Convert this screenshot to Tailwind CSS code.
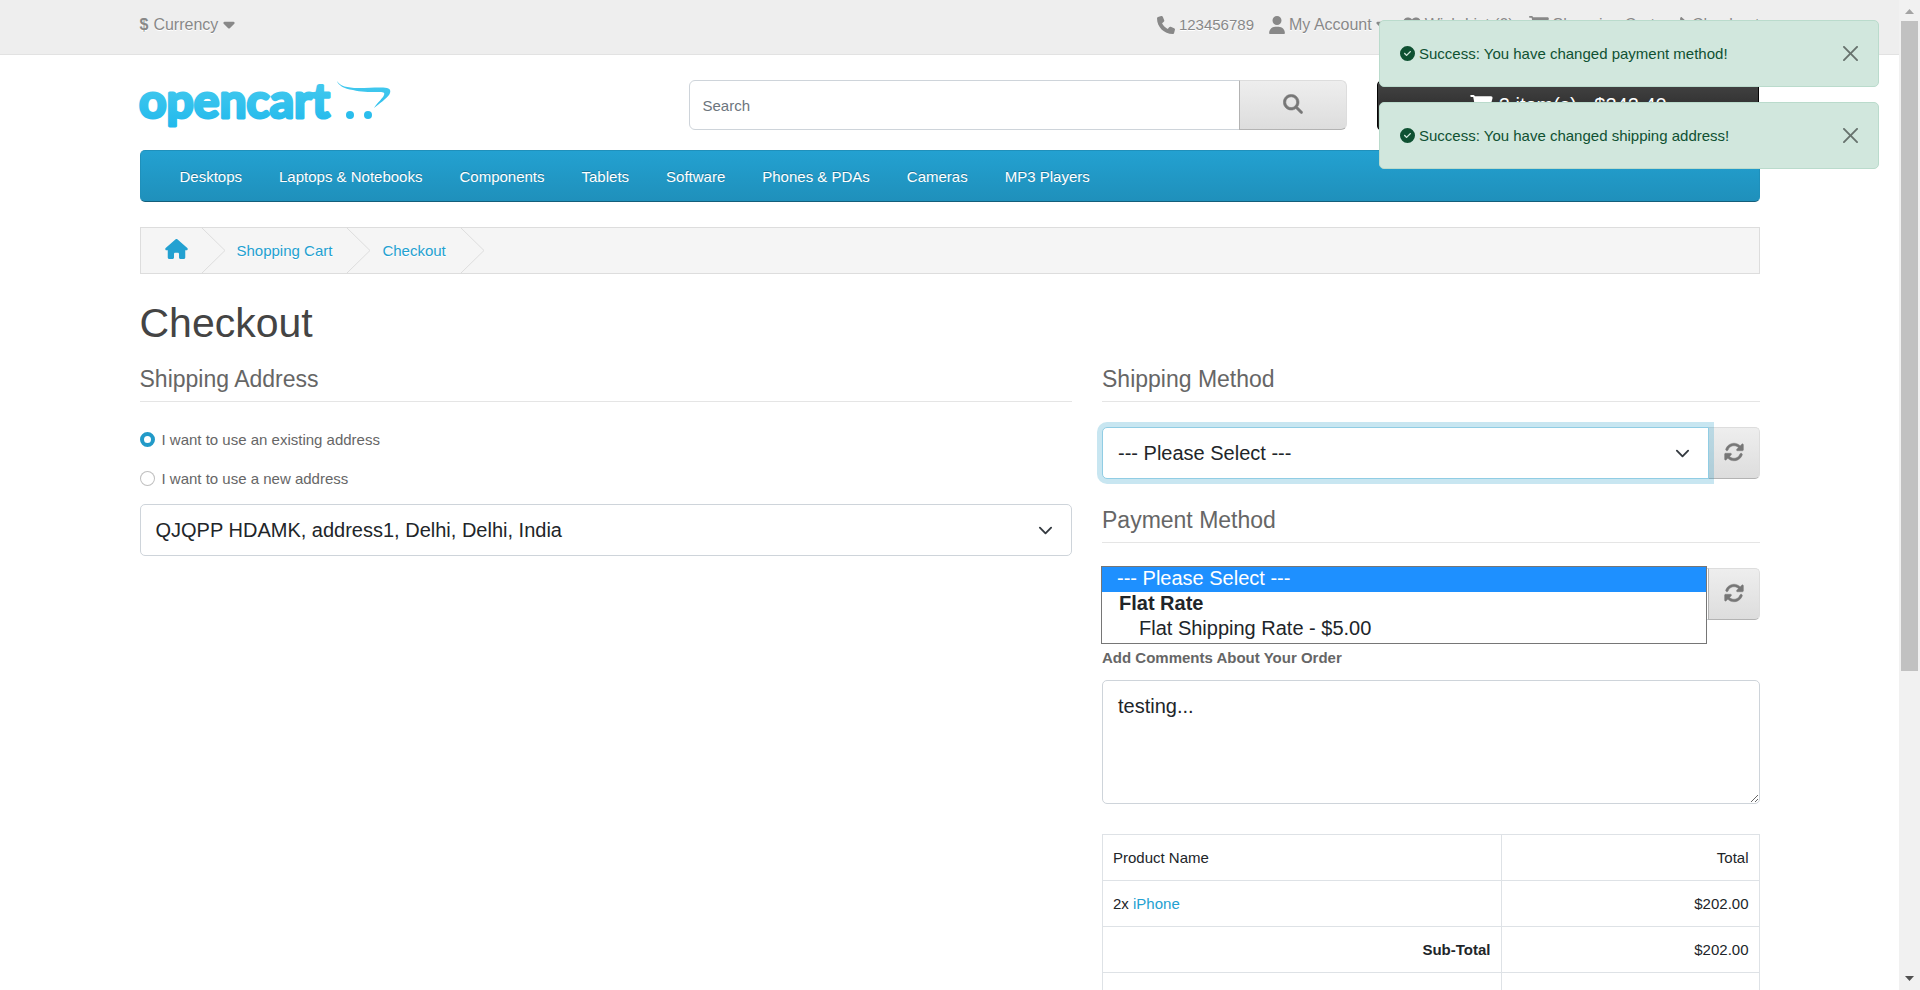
<!DOCTYPE html>
<html lang="en">
<head>
<meta charset="utf-8">
<meta name="viewport" content="width=device-width, initial-scale=1">
<title>Checkout</title>
<script src="https://cdn.jsdelivr.net/npm/@tailwindcss/browser@4"></script>
</head>
<body class="flex h-screen overflow-hidden bg-white font-['Liberation_Sans',Arial,sans-serif] text-[15px] leading-[22px] text-[#666666]">

<svg class="hidden" aria-hidden="true">
  <symbol id="phone" viewBox="0 0 512 512"><path d="M164.9 24.6c-7.7-18.6-28-28.5-47.4-23.2l-88 24C12.1 30.2 0 46 0 64C0 311.4 200.6 512 448 512c18 0 33.8-12.1 38.6-29.5l24-88c5.3-19.4-4.6-39.7-23.2-47.4l-96-40c-16.3-6.8-35.2-2.1-46.3 11.6L304.7 368C234.3 334.7 177.3 277.7 144 207.3L193.3 167c13.7-11.2 18.4-30 11.6-46.3l-40-96z"/></symbol>
  <symbol id="user" viewBox="0 0 448 512"><path d="M224 256A128 128 0 1 0 224 0a128 128 0 1 0 0 256zm-45.7 48C79.8 304 0 383.8 0 482.3C0 498.7 13.3 512 29.7 512H418.3c16.4 0 29.7-13.3 29.7-29.7C448 383.8 368.2 304 269.7 304H178.3z"/></symbol>
  <symbol id="heart" viewBox="0 0 512 512"><path d="M47.6 300.4L228.3 469.1c7.5 7 17.4 10.9 27.7 10.9s20.2-3.9 27.7-10.9L464.4 300.4c30.4-28.3 47.6-68 47.6-109.5v-5.8c0-69.9-50.5-129.5-119.4-141C347 36.5 300.6 51.4 268 84L256 96 244 84c-32.6-32.6-79-47.5-124.6-39.9C50.5 55.6 0 115.2 0 185.1v5.8c0 41.5 17.2 81.2 47.6 109.5z"/></symbol>
  <symbol id="cart" viewBox="0 0 576 512"><path d="M0 24C0 10.7 10.7 0 24 0H69.5c22 0 41.5 12.8 50.6 32h411c26.3 0 45.5 25 38.6 50.4l-41 152.3c-8.5 31.4-37 53.3-69.5 53.3H170.7l5.4 28.5c2.2 11.3 12.1 19.5 23.6 19.5H488c13.3 0 24 10.7 24 24s-10.7 24-24 24H199.7c-34.6 0-64.3-24.6-70.7-58.5L77.4 54.5c-.7-3.8-4-6.5-7.9-6.5H24C10.7 48 0 37.3 0 24zM128 464a48 48 0 1 1 96 0 48 48 0 1 1 -96 0zm336-48a48 48 0 1 1 0 96 48 48 0 1 1 0-96z"/></symbol>
  <symbol id="share" viewBox="0 0 512 512"><path d="M307 34.8c-11.5 5.1-19 16.6-19 29.2v64H176C78.8 128 0 206.8 0 304C0 417.3 81.5 467.9 100.2 478.1c2.5 1.4 5.3 1.9 8.1 1.9c10.9 0 19.7-8.9 19.7-19.7c0-7.5-4.3-14.4-9.8-19.5C108.8 431.9 96 414.4 96 384c0-53 43-96 96-96h96v64c0 12.6 7.4 24.1 19 29.2s25 3 34.4-5.4l160-144c6.7-6.1 10.6-14.7 10.6-23.8s-3.8-17.7-10.6-23.8l-160-144c-9.4-8.5-22.9-10.6-34.4-5.4z"/></symbol>
  <symbol id="search" viewBox="-10 -10 532 532"><path stroke="currentColor" stroke-width="16" d="M416 208c0 45.9-14.9 88.3-40 122.7L502.6 457.4c12.5 12.5 12.5 32.8 0 45.3s-32.8 12.5-45.3 0L330.7 376c-34.4 25.2-76.8 40-122.7 40C93.1 416 0 322.9 0 208S93.1 0 208 0S416 93.1 416 208zM208 352a144 144 0 1 0 0-288 144 144 0 1 0 0 288z"/></symbol>
  <symbol id="home" viewBox="0 0 576 512"><path d="M575.8 255.5c0 18-15 32.1-32 32.1h-32l.7 160.2c0 2.7-.2 5.4-.5 8.1V472c0 22.1-17.9 40-40 40H456c-1.1 0-2.2 0-3.3-.1c-1.4 .1-2.8 .1-4.2 .1H416 392c-22.1 0-40-17.9-40-40V448 384c0-17.7-14.3-32-32-32H256c-17.7 0-32 14.3-32 32v64 24c0 22.1-17.9 40-40 40H160 128.1c-1.5 0-3-.1-4.5-.2c-1.2 .1-2.4 .2-3.6 .2H104c-22.1 0-40-17.9-40-40V360c0-.9 0-1.9 .1-2.8V287.6H32c-18 0-32-14-32-32.1c0-9 3-17 10-24L266.4 8c7-7 15-8 22-8s15 2 21 7L564.8 231.5c8 7 12 15 11 24z"/></symbol>
  <symbol id="check" viewBox="0 0 512 512"><path d="M256 512A256 256 0 1 0 256 0a256 256 0 1 0 0 512zM369 209L241 337c-9.4 9.4-24.6 9.4-33.9 0l-64-64c-9.4-9.4-9.4-24.6 0-33.9s24.6-9.4 33.9 0l47 47L335 175c9.4-9.4 24.6-9.4 33.9 0s9.4 24.6 0 33.9z"/></symbol>
  <symbol id="caret" viewBox="0 0 320 512"><path d="M137.4 374.6c12.5 12.5 32.8 12.5 45.3 0l128-128c9.2-9.2 11.9-22.9 6.9-34.9s-16.6-19.8-29.6-19.8L32 192c-12.9 0-24.6 7.8-29.6 19.8s-2.2 25.7 6.9 34.9l128 128z"/></symbol>
  <symbol id="rotate" viewBox="0 0 512 512"><path stroke="currentColor" stroke-width="12" d="M142.9 142.9c62.2-62.2 162.7-62.5 225.3-1L327 183c-6.9 6.9-8.9 17.2-5.2 26.2s12.5 14.8 22.2 14.8H463.5c0 0 0 0 0 0H472c13.3 0 24-10.7 24-24V72c0-9.7-5.8-18.5-14.8-22.2s-19.3-1.7-26.2 5.2L413.4 96.6c-87.6-86.5-228.7-86.2-315.8 1C73.2 122 55.6 150.7 44.8 181.4c-5.9 16.7 2.9 34.9 19.5 40.8s34.9-2.9 40.8-19.5c7.7-21.8 20.2-42.3 37.8-59.8zM16 312v7.6 .7V440c0 9.7 5.8 18.5 14.8 22.2s19.3 1.7 26.2-5.2l41.6-41.6c87.6 86.5 228.7 86.2 315.8-1c24.4-24.4 42.1-53.1 52.9-83.7c5.9-16.7-2.9-34.9-19.5-40.8s-34.9 2.9-40.8 19.5c-7.7 21.8-20.2 42.3-37.8 59.8c-62.2 62.2-162.7 62.5-225.3 1L185 329c6.9-6.9 8.9-17.2 5.2-26.2s-12.5-14.8-22.2-14.8H48.4h-.7H40c-13.3 0-24 10.7-24 24z"/></symbol>
  <symbol id="close" viewBox="0 0 16 16"><path d="M.293.293a1 1 0 011.414 0L8 6.586 14.293.293a1 1 0 111.414 1.414L9.414 8l6.293 6.293a1 1 0 01-1.414 1.414L8 9.414l-6.293 6.293a1 1 0 01-1.414-1.414L6.586 8 .293 1.707a1 1 0 010-1.414z"/></symbol>
  <symbol id="chevron" viewBox="0 0 16 16"><path fill="none" stroke="#343a40" stroke-width="2" stroke-linecap="round" stroke-linejoin="round" d="M2 5l6 6 6-6"/></symbol>
</svg>

<div class="relative min-w-0 flex-1 overflow-hidden">

  <nav class="h-[55px] border-b border-[#e2e2e2] bg-[#eeeeee] text-[#888888]">
    <div class="mx-auto flex max-w-[1620px] items-center justify-between pt-[14px]">
      <button type="button" class="flex items-center gap-[5px] text-[16px] [text-shadow:0_1px_0_#fff]"><strong>$</strong> <span>Currency</span> <svg class="mb-[3px] h-[18px] w-[12px] fill-current"><use href="#caret"/></svg></button>
      <ul class="flex items-center gap-[15px] text-[16px] [text-shadow:0_1px_0_#fff]">
        <li><a href="#" class="flex items-center gap-1 text-[15px]"><svg class="size-[18px] fill-current"><use href="#phone"/></svg>123456789</a></li>
        <li><a href="#" class="flex items-center gap-1"><svg class="h-[18px] w-4 fill-current"><use href="#user"/></svg><span>My Account</span><svg class="mb-[3px] h-[18px] w-[12px] fill-current"><use href="#caret"/></svg></a></li>
        <li><a href="#" class="flex items-center gap-1"><svg class="size-[18px] fill-current"><use href="#heart"/></svg>Wish List (0)</a></li>
        <li><a href="#" class="flex items-center gap-1"><svg class="h-[18px] w-5 fill-current"><use href="#cart"/></svg>Shopping Cart</a></li>
        <li><a href="#" class="flex items-center gap-1"><svg class="size-[18px] fill-current"><use href="#share"/></svg>Checkout</a></li>
      </ul>
    </div>
  </nav>

  <div class="mx-auto max-w-[1620px]">
    <header class="-mx-[15px] flex pt-[25px]">
      <div class="w-4/12 px-[15px]">
        <a href="#" aria-label="opencart">
          <svg class="h-[52px] w-[252px] overflow-visible" viewBox="0 0 252 52">
            <defs><linearGradient id="logo" gradientUnits="userSpaceOnUse" x1="0" y1="0" x2="0" y2="50"><stop offset="0" stop-color="#46caee"/><stop offset="1" stop-color="#1fb8ec"/></linearGradient></defs>
            <text x="-1" y="38" font-family="Lato, sans-serif" font-weight="700" font-size="48" fill="url(#logo)" stroke="url(#logo)" stroke-width="3" stroke-linejoin="round">opencart</text>
            <path fill="url(#logo)" d="M197 1C200 6 207 8 218 8C231 8 240 7 247 8C251 9 251 12 249 15C246 19 240 23 234 28C238 22 243 18 244 15C245 12 243 12 238 12C228 12 221 12 213 10C204 9 198 5 197 1Z"/>
            <circle cx="210" cy="35" r="4" fill="url(#logo)"/><circle cx="228" cy="35" r="4" fill="url(#logo)"/>
          </svg>
        </a>
      </div>
      <div class="flex w-5/12 px-[15px]">
        <input type="text" aria-label="Search" placeholder="Search" class="h-[50px] min-w-0 flex-1 rounded-l-[6px] border border-[#ced4da] px-3 text-[15px] placeholder:text-[#6c757d]">
        <button type="button" aria-label="Search" class="-ml-px flex h-[50px] w-[108px] items-center justify-center rounded-r-[6px] border border-[#dddddd] border-b-[#b3b3b3] border-l-[#b3b3b3] bg-linear-to-b from-[#eeeeee] to-[#dddddd] text-[#777777]"><svg class="mb-[2px] size-5 fill-current"><use href="#search"/></svg></button>
      </div>
      <div class="w-3/12 px-[15px]">
        <button type="button" class="flex h-[51px] w-full items-center justify-center gap-[6px] rounded-[5px] border border-[#040404] bg-linear-to-b from-[#444444] to-[#222222] pb-[2px] text-[20px] text-white"><svg class="h-5 w-[23px] fill-current"><use href="#cart"/></svg>2 item(s) - $242.40</button>
      </div>
    </header>

    <nav class="mt-[18px] flex h-[52px] items-center gap-[37px] rounded-[5px] border border-[#1f90bb] border-b-[#145e7a] bg-linear-to-b from-[#23a1d1] to-[#1f90bb] px-[39px] pt-[2px] text-white [text-shadow:0_-1px_0_rgba(0,0,0,0.25)]">
      <a href="#">Desktops</a>
      <a href="#">Laptops &amp; Notebooks</a>
      <a href="#">Components</a>
      <a href="#">Tablets</a>
      <a href="#">Software</a>
      <a href="#">Phones &amp; PDAs</a>
      <a href="#">Cameras</a>
      <a href="#">MP3 Players</a>
    </nav>

    <ol class="mt-[25px] flex h-[47px] items-center border border-[#dddddd] bg-[#f5f5f5] text-[#23a1d1] [text-shadow:0_1px_0_#fff]">
      <li class="flex items-center pl-[24px]"><a href="#" aria-label="Home"><svg class="mb-1 h-5 w-[23px] fill-current"><use href="#home"/></svg></a><svg class="ml-[14px] h-[45px] w-6" viewBox="0 0 24 45" fill="none" stroke="#dddddd"><path d="M0 0L23 22.5L0 45"/></svg></li>
      <li class="flex items-center pl-[11px]"><a href="#">Shopping Cart</a><svg class="ml-[15px] h-[45px] w-6" viewBox="0 0 24 45" fill="none" stroke="#dddddd"><path d="M0 0L23 22.5L0 45"/></svg></li>
      <li class="flex items-center pl-[11px]"><a href="#">Checkout</a><svg class="ml-[15px] h-[45px] w-6" viewBox="0 0 24 45" fill="none" stroke="#dddddd"><path d="M0 0L23 22.5L0 45"/></svg></li>
    </ol>

    <h1 class="mt-[25px] text-[41px] leading-[48px] text-[#444444]">Checkout</h1>

    <main class="-mx-[15px] flex pt-[15px]">
      <section class="w-7/12 px-[15px]">
        <fieldset>
          <legend class="mb-[25px] block h-[40px] w-full border-b border-[#e5e5e5] text-[23px] leading-[34px]">Shipping Address</legend>
          <div class="flex h-[26px] items-center gap-[7px]"><input type="radio" id="existing" name="address" checked class="mb-px size-[15px] appearance-none rounded-full border border-black/25 bg-white checked:border-4 checked:border-[#229ac8]"><label for="existing">I want to use an existing address</label></div>
          <div class="mt-[13px] flex h-[26px] items-center gap-[7px]"><input type="radio" id="new" name="address" class="mb-px size-[15px] appearance-none rounded-full border border-black/25 bg-white checked:border-4 checked:border-[#229ac8]"><label for="new">I want to use a new address</label></div>
          <div class="relative mt-[12px]">
            <select aria-label="Address" class="block h-[52px] w-full appearance-none rounded-[5px] border border-[#ced4da] bg-white px-[15px] text-[20px] text-[#212529]"><option>QJQPP HDAMK, address1, Delhi, Delhi, India</option></select>
            <svg class="pointer-events-none absolute top-[19px] right-[19px] size-[15px]"><use href="#chevron"/></svg>
          </div>
        </fieldset>
      </section>

      <section class="w-5/12 px-[15px]">
        <fieldset>
          <legend class="mb-[25px] block h-[40px] w-full border-b border-[#e5e5e5] text-[23px] leading-[34px]">Shipping Method</legend>
          <div class="flex">
            <div class="relative z-10 min-w-0 flex-1">
              <select aria-label="Shipping method" class="block h-[52px] w-full appearance-none rounded-l-[5px] border border-[#91cde4] bg-white px-[15px] text-[20px] text-[#212529] shadow-[0_0_0_5px_rgba(34,154,200,0.25)] outline-none"><option>--- Please Select ---</option></select>
              <svg class="pointer-events-none absolute top-[19px] right-[19px] size-[15px]"><use href="#chevron"/></svg>
            </div>
            <button type="button" aria-label="Refresh shipping methods" class="-ml-px flex h-[52px] w-[52px] items-center justify-center rounded-r-[5px] border border-[#dddddd] border-b-[#b3b3b3] border-l-[#b3b3b3] bg-linear-to-b from-[#eeeeee] to-[#dddddd] text-[#777777]"><svg class="mb-[2px] size-5 fill-current"><use href="#rotate"/></svg></button>
          </div>
        </fieldset>
        <fieldset class="mt-[24px]">
          <legend class="mb-[25px] block h-[40px] w-full border-b border-[#e5e5e5] text-[23px] leading-[34px]">Payment Method</legend>
          <div class="relative flex">
            <select aria-label="Payment method" class="block h-[52px] min-w-0 flex-1 appearance-none rounded-l-[5px] border border-[#ced4da] bg-white px-[15px] text-[20px] text-[#212529]"><option>Cash On Delivery</option></select>
            <button type="button" aria-label="Refresh payment methods" class="-ml-px flex h-[52px] w-[52px] items-center justify-center rounded-r-[5px] border border-[#dddddd] border-b-[#b3b3b3] border-l-[#b3b3b3] bg-linear-to-b from-[#eeeeee] to-[#dddddd] text-[#777777]"><svg class="mb-[2px] size-5 fill-current"><use href="#rotate"/></svg></button>
            <!-- Open option list of the shipping method select -->
            <ul role="listbox" aria-label="Shipping method options" class="absolute -top-[2px] right-[53px] -left-px z-10 h-[78px] border border-[#767676] bg-white text-[20px] leading-[23px] text-[#212529]">
              <li role="option" aria-selected="true" class="h-[25px] bg-[#1e90ff] pl-[15px] text-white">--- Please Select ---</li>
              <li class="h-[25px] pl-[17px] font-bold">Flat Rate</li>
              <li role="option" class="h-[25px] pl-[37px]">Flat Shipping Rate - $5.00</li>
            </ul>
          </div>
        </fieldset>
        <label for="comment" class="mt-[27px] block font-bold">Add Comments About Your Order</label>
        <textarea id="comment" class="mt-[11px] block h-[124px] w-full resize-y rounded-[5px] border border-[#ced4da] px-[15px] py-[10px] text-[20px] leading-[30px] text-[#212529]">testing...</textarea>
        <table class="mt-[30px] w-full table-fixed border-collapse text-[#212529]">
          <colgroup><col><col class="w-[258px]"></colgroup>
          <thead>
            <tr class="h-[46px]"><th class="border border-[#dee2e6] px-[10px] text-left font-normal">Product Name</th><th class="border border-[#dee2e6] px-[10px] text-right font-normal">Total</th></tr>
          </thead>
          <tbody>
            <tr class="h-[46px]"><td class="border border-[#dee2e6] px-[10px]">2x <a href="#" class="text-[#23a1d1]">iPhone</a></td><td class="border border-[#dee2e6] px-[10px] text-right">$202.00</td></tr>
          </tbody>
          <tfoot>
            <tr class="h-[46px]"><th class="border border-[#dee2e6] px-[10px] text-right">Sub-Total</th><td class="border border-[#dee2e6] px-[10px] text-right">$202.00</td></tr>
            <tr class="h-[46px]"><th class="border border-[#dee2e6] px-[10px] text-right">VAT (20%)</th><td class="border border-[#dee2e6] px-[10px] text-right">$40.40</td></tr>
          </tfoot>
        </table>
      </section>
    </main>
  </div>

  <!-- Notifications -->
  <div class="absolute top-5 right-5 z-20 flex w-[500px] flex-col gap-[15px] text-[#0f5132]">
    <div role="alert" class="flex h-[67px] items-center gap-1 rounded-[5px] border border-[#badbcc] bg-[#d1e7dd] px-5"><svg class="size-[15px] fill-current"><use href="#check"/></svg><span class="flex-1">Success: You have changed payment method!</span><button type="button" aria-label="Close" class="opacity-50"><svg class="size-[15px] fill-black"><use href="#close"/></svg></button></div>
    <div role="alert" class="flex h-[67px] items-center gap-1 rounded-[5px] border border-[#badbcc] bg-[#d1e7dd] px-5"><svg class="size-[15px] fill-current"><use href="#check"/></svg><span class="flex-1">Success: You have changed shipping address!</span><button type="button" aria-label="Close" class="opacity-50"><svg class="size-[15px] fill-black"><use href="#close"/></svg></button></div>
  </div>
</div>

<!-- Page scrollbar -->
<div class="flex w-[21px] flex-col items-center bg-[#f1f1f1]" aria-hidden="true">
  <svg class="h-[21px] w-[21px] shrink-0" viewBox="0 0 21 21"><path fill="#a3a3a3" d="M6 14h9L10.500 9z"/></svg>
  <div class="min-h-0 w-[17px] flex-[650] bg-[#c1c1c1]"></div>
  <div class="min-h-0 flex-[298]"></div>
  <svg class="h-[21px] w-[21px] shrink-0" viewBox="0 0 21 21"><path fill="#505050" d="M6 7h9L10.500 12z"/></svg>
</div>
</body>
</html>
